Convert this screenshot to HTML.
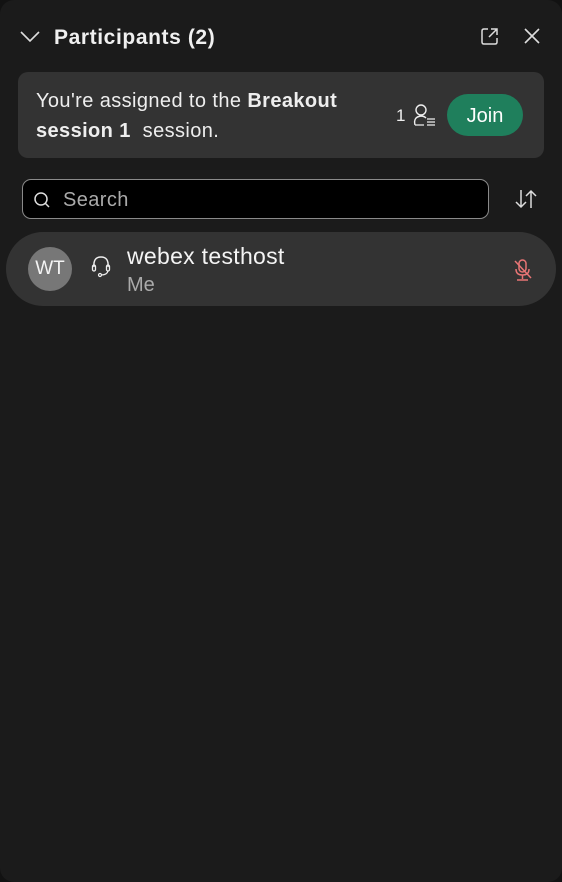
<!DOCTYPE html>
<html><head><meta charset="utf-8"><style>
html,body{margin:0;padding:0;width:562px;height:882px;background:#121212;overflow:hidden}
body{font-family:"Liberation Sans",sans-serif;color:#fff}
.p{position:absolute;left:0;top:0;width:562px;height:882px;background:#1b1b1b;border-radius:14px}
.a{position:absolute;white-space:nowrap}
</style></head><body><div class="p">
<svg class="a" style="left:20px;top:29px" width="20" height="14"><path d="M1 3 L10 12 L19 3" fill="none" stroke="#ddd" stroke-width="1.6"/></svg>
<div class="a" style="left:54px;top:26px;font-size:21px;font-weight:bold;letter-spacing:0.6px;color:#f0f0f0">Participants (2)</div>
<svg class="a" style="left:480px;top:27px" width="20" height="20"><path d="M8 2 H4 Q2 2 2 4 V15 Q2 17 4 17 H15 Q17 17 17 15 V11 M11 2 H17 V8 M17 2 L9 10" fill="none" stroke="#ddd" stroke-width="1.5"/></svg>
<svg class="a" style="left:523px;top:27px" width="18" height="18"><path d="M2 2 L16 16 M16 2 L2 16" stroke="#ddd" stroke-width="1.6"/></svg>
<div class="a" style="left:18px;top:72px;width:526px;height:86px;background:#333;border-radius:10px"></div>
<div class="a" style="left:36px;top:86px;font-size:20px;letter-spacing:0.4px;line-height:30px;color:#eee">You're assigned to the <b>Breakout</b><br><b>session 1</b>&nbsp; session.</div>
<div class="a" style="left:396px;top:106px;font-size:17px;color:#eee">1</div>
<svg class="a" style="left:411px;top:103px" width="26" height="24"><circle cx="10" cy="7" r="5" fill="none" stroke="#eee" stroke-width="1.4"/><path d="M4 22 Q2 14 10 13 Q13 13 15 15" fill="none" stroke="#eee" stroke-width="1.4"/><path d="M4 22 H13 M16 16 H24 M16 19 H24 M16 22 H24" stroke="#eee" stroke-width="1.3"/></svg>
<div class="a" style="left:447px;top:94px;width:76px;height:42px;background:#1f7f5c;border-radius:21px;text-align:center;line-height:44px;font-size:20px;color:#fff">Join</div>
<div class="a" style="left:22px;top:179px;width:465px;height:38px;background:#000;border:1px solid #8a8a8a;border-radius:9px"></div>
<svg class="a" style="left:33px;top:191px" width="18" height="18"><circle cx="8" cy="8" r="6" fill="none" stroke="#ddd" stroke-width="1.5"/><path d="M12.5 12.5 L16 16" stroke="#ddd" stroke-width="1.5"/></svg>
<div class="a" style="left:63px;top:189px;font-size:20px;letter-spacing:0.4px;color:#aaa">Search</div>
<svg class="a" style="left:514px;top:188px" width="24" height="22"><path d="M7 2 V19 M2 14 L7 19 L12 14 M17 20 V3 M12 8 L17 3 L22 8" fill="none" stroke="#ddd" stroke-width="1.5"/></svg>
<div class="a" style="left:6px;top:232px;width:550px;height:74px;background:#333;border-radius:37px"></div>
<div class="a" style="left:28px;top:247px;width:44px;height:44px;border-radius:50%;background:#777;text-align:center;line-height:44px;font-size:19px;color:#f4f4f4">WT</div>
<svg class="a" style="left:90px;top:254px" width="24" height="24"><path d="M4 13 Q3 3 11 3 Q19 3 18 13" fill="none" stroke="#eee" stroke-width="1.5"/><rect x="2.5" y="11" width="3" height="6" rx="1.5" fill="none" stroke="#eee" stroke-width="1.3"/><rect x="16.5" y="11" width="3" height="6" rx="1.5" fill="none" stroke="#eee" stroke-width="1.3"/><path d="M18 17 Q17 21 11 21" fill="none" stroke="#eee" stroke-width="1.3"/><circle cx="10" cy="21" r="1.5" fill="none" stroke="#eee" stroke-width="1.2"/></svg>
<div class="a" style="left:127px;top:243px;font-size:23px;letter-spacing:0.3px;color:#f4f4f4">webex testhost</div>
<div class="a" style="left:127px;top:274px;font-size:20px;color:#aaa">Me</div>
<svg class="a" style="left:512px;top:258px" width="22" height="24"><rect x="7" y="2" width="7" height="12" rx="3.5" fill="none" stroke="#e87575" stroke-width="1.5"/><path d="M4 11 Q4 17 10.5 17 Q17 17 17 11 M10.5 17 V21 M5 22 H16 M3 3 L19 20" fill="none" stroke="#e87575" stroke-width="1.5"/></svg>
</div></body></html>
